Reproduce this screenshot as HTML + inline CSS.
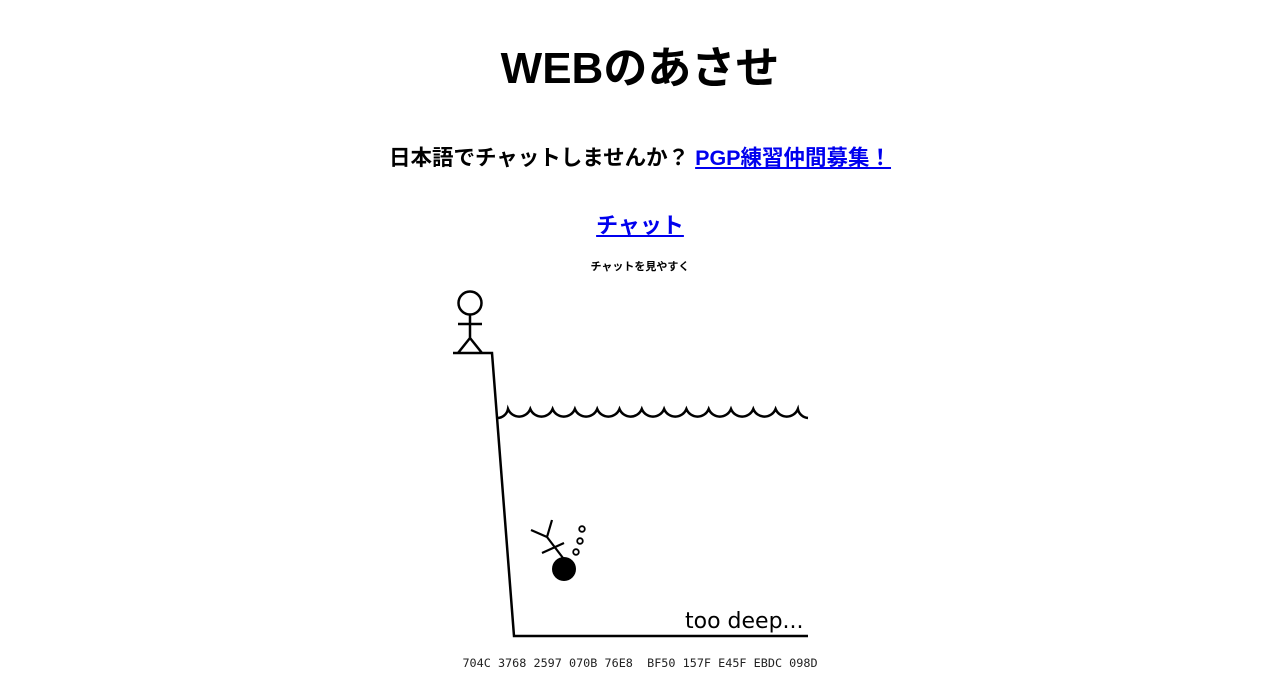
<!DOCTYPE html>
<html><head><meta charset="utf-8"><style>
body{margin:0;width:1280px;height:688px;background:#fff;position:relative;font-family:"Liberation Sans","Noto Sans CJK JP",sans-serif;color:#000;overflow:hidden}
.c{position:absolute;left:0;width:1280px;text-align:center;white-space:nowrap;font-weight:bold}
a{color:#0000ee;text-decoration:underline}
</style></head><body>
<div class="c" style="top:41px;font-size:44px;line-height:56px">WEBのあさせ</div>
<div class="c" style="top:144px;font-size:21.5px;line-height:28px">日本語でチャットしませんか？ <a>PGP練習仲間募集！</a></div>
<div class="c" style="top:212px;font-size:22px;line-height:28px"><a>チャット</a></div>
<div class="c" style="top:259px;font-size:11px;line-height:16px">チャットを見やすく</div>
<svg style="position:absolute;left:0;top:0" width="1280" height="688">
<g fill="none" stroke="#000" stroke-width="2.5">
<circle cx="470" cy="303" r="11.5"/>
<path d="M470 315V339M458 324H482M470 338L458 353M470 338L482 353M453 353H492L514 636H808"/>
<path d="M497 418 A11 11 0 0 0 508 409 A12 12 0 0 0 530.3 409 A12 12 0 0 0 552.6 409 A12 12 0 0 0 574.9 409 A12 12 0 0 0 597.2 409 A12 12 0 0 0 619.5 409 A12 12 0 0 0 641.8 409 A12 12 0 0 0 664.1 409 A12 12 0 0 0 686.4 409 A12 12 0 0 0 708.7 409 A12 12 0 0 0 731 409 A12 12 0 0 0 753.3 409 A12 12 0 0 0 775.6 409 A12 12 0 0 0 797.9 409 A11 11 0 0 0 808 418"/>
<path d="M563 558L547 537M531 530L547 537L552 520M542 553L564 543" stroke-width="2.2"/>
<circle cx="582" cy="529" r="2.8" stroke-width="1.8"/>
<circle cx="580" cy="541" r="2.8" stroke-width="1.8"/>
<circle cx="576" cy="552" r="2.8" stroke-width="1.8"/>
</g>
<circle cx="564" cy="569" r="12" fill="#000"/>
<text x="685" y="628" font-family="DejaVu Sans,sans-serif" font-size="22">too deep...</text>
<text x="640" y="667" text-anchor="middle" font-family="DejaVu Sans Mono,Liberation Mono,monospace" font-size="11.8" fill="#222" xml:space="preserve">704C 3768 2597 070B 76E8  BF50 157F E45F EBDC 098D</text>
</svg>
</body></html>
